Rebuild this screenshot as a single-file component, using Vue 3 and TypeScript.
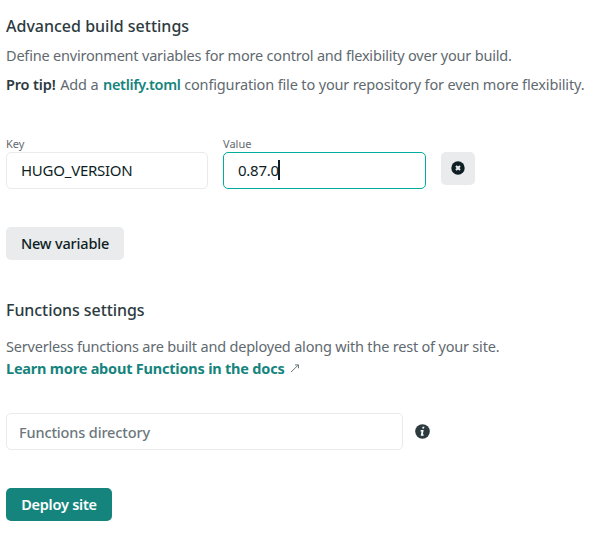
<script setup lang="ts">
import { ref } from 'vue'

const variableKey = ref('HUGO_VERSION')
const variableValue = ref('0.87.0')
</script>

<template>
  <main class="page">
    <section class="build">
      <h2>Advanced build settings</h2>
      <p class="intro">Define environment variables for more control and flexibility over your build.</p>
      <p class="tip"><strong>Pro tip!</strong> Add a <a>netlify.toml</a> configuration file to your repository for even more flexibility.</p>
    </section>
    <div class="variables">
      <label class="field"><span class="caption">Key</span><span class="input">{{ variableKey }}</span></label>
      <label class="field"><span class="caption">Value</span><span class="input focused">{{ variableValue }}<i class="caret"></i></span></label>
      <button class="remove" aria-label="Remove variable">
        <svg width="14" height="14" viewBox="0 0 14 14"><circle cx="7" cy="7" r="6.7" fill="#0e1e25" /><path d="M5 5l4 4M9 5L5 9" stroke="#e9ebeb" stroke-width="2" /></svg>
      </button>
    </div>
    <button class="secondary">New variable</button>
    <section class="functions">
      <h2>Functions settings</h2>
      <p>Serverless functions are built and deployed along with the rest of your site.</p>
      <p class="docs"><a>Learn more about Functions in the docs</a>
        <svg width="10" height="10" viewBox="0 0 10 10"><path d="M1 9L8.2 2.1M5 1.9h3.5v3.4" fill="none" stroke="#6c777c" stroke-width="1" /></svg>
      </p>
    </section>
    <div class="directory">
      <span class="placeholder">Functions directory</span>
      <svg width="15" height="15" viewBox="0 0 14 14"><circle cx="7" cy="7" r="6.8" fill="#2d3b41" /><path d="M7.1 2.6h1.7l-.4 1.7H6.7zM5.4 5.7h2.7L7.3 9.7h1l-.3 1.2H5.3l.8-4h-1z" fill="#fff" /></svg>
    </div>
    <button class="primary">Deploy site</button>
  </main>
</template>

<style>
body { background: #fff; }
</style>
<style scoped>
.page { box-sizing: border-box; height: 553px; padding: 15px 0 0 6px; font-family: "Noto Sans", sans-serif; font-size: 14.5px; letter-spacing: -0.2px; line-height: 22px; color: #5f6a70; white-space: nowrap; display: flex; flex-direction: column; align-items: flex-start; overflow: hidden; }
h2, p { margin: 0; }
h2 { font-size: 16px; letter-spacing: 0; line-height: 22px; font-weight: 500; color: #2d3b41; }
.functions h2 { letter-spacing: -0.07px; }
.intro { margin-top: 7px; }
.tip { margin-top: 7px; letter-spacing: -0.15px; }
.tip a { letter-spacing: -0.33px; }
strong { font-weight: 600; color: #2d3b41; margin-right: 1px; }
.tip a { margin-left: 1px; }
.variables { display: flex; align-items: flex-end; gap: 15px; margin-top: 41px; }
a { font-weight: 600; color: #15847d; }
.field { display: flex; flex-direction: column; }
.caption { font-size: 11px; letter-spacing: 0; line-height: 16px; }
.input { box-sizing: border-box; width: 202px; height: 37px; border: 1px solid #e9ebeb; border-radius: 5px; padding: 0 14px 2px; font-size: 15px; letter-spacing: -0.25px; color: #0e1e25; display: flex; align-items: center; }
.focused { width: 203px; border-color: #00ad9f; }
.caret { width: 2px; height: 20px; margin-left: -1px; background: #0e1e25; }
button { border: 0; border-radius: 5px; font: 500 14.5px/20px "Noto Sans", sans-serif; letter-spacing: -0.17px; background: #e9ebec; color: #0e1e25; display: flex; align-items: center; justify-content: center; padding: 0 0 2px; }
.remove { width: 34px; height: 33px; margin-bottom: 4px; }
.secondary { width: 118px; height: 33px; margin-top: 38px; }
.functions { margin-top: 39px; }
.functions p { margin-top: 14px; }
.functions .docs { margin-top: 0; display: flex; align-items: center; gap: 6px; }
.docs a { font-weight: 700; letter-spacing: -0.21px; }
.directory { display: flex; align-items: center; gap: 12px; margin-top: 34px; }
.placeholder { box-sizing: border-box; width: 397px; height: 37px; border: 1px solid #e9ebeb; border-radius: 5px; padding: 7px 12px; font-weight: 500; letter-spacing: -0.14px; color: #6c777c; }
.primary { width: 106px; height: 33px; margin-top: 38px; background: #15847d; color: #fff; font-weight: 600; letter-spacing: -0.23px; }
</style>
